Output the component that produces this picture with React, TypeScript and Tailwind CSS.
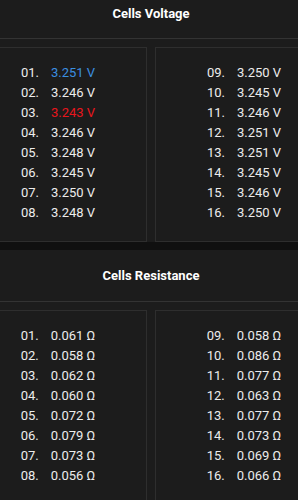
const voltages = [
  "3.251", "3.246", "3.243", "3.246", "3.248", "3.245", "3.250", "3.248",
  "3.250", "3.245", "3.246", "3.251", "3.251", "3.245", "3.246", "3.250",
];

const resistances = [
  "0.061", "0.058", "0.062", "0.060", "0.072", "0.079", "0.073", "0.056",
  "0.058", "0.086", "0.077", "0.063", "0.077", "0.073", "0.069", "0.066",
];

// highest cell shown blue, lowest red
const maxCell = 0;
const minCell = 2;

function CellList({ values, unit, start, colored }: { values: string[]; unit: string; start: number; colored?: boolean }) {
  return (
    <div className="border border-[#2e2e2e] bg-[#1c1c1c] pt-[15px] pb-[18px] flex justify-center">
      <div className="flex flex-col">
        {values.map((v, i) => {
          const idx = start + i;
          let color = "text-[#ececec]";
          if (colored && idx === maxCell) color = "text-[#3b8fe0]";
          if (colored && idx === minCell) color = "text-[#e8161d]";
          return (
            <div key={idx} className="flex h-[20px] items-center text-[13px]">
              <span className="w-[30px] text-[#ececec]">{String(idx + 1).padStart(2, "0")}.</span>
              <span className={color}>
                {v} {unit}
              </span>
            </div>
          );
        })}
      </div>
    </div>
  );
}

function Section({ title, values, unit, colored, header }: { title: string; values: string[]; unit: string; colored?: boolean; header: string }) {
  return (
    <div className="bg-[#1c1c1c]">
      <div className={`${header} flex items-center justify-center border-b border-[#333333]`}>
        <span className="text-[13px] font-bold text-white">{title}</span>
      </div>
      <div className="grid grid-cols-2 gap-2 pt-[8px]">
        <CellList values={values.slice(0, 8)} unit={unit} start={0} colored={colored} />
        <CellList values={values.slice(8)} unit={unit} start={8} colored={colored} />
      </div>
    </div>
  );
}

export default function App() {
  return (
    <div className="w-[298px] h-[500px] overflow-hidden bg-[#101010] font-['Roboto',sans-serif]">
      <div className="w-[364px] -ml-[31px] -mt-[11px]">
        <Section title="Cells Voltage" values={voltages} unit="V" colored header="h-[50px]" />
        <div className="mt-2">
          <Section title="Cells Resistance" values={resistances} unit="Ω" header="h-[52px]" />
        </div>
      </div>
    </div>
  );
}
